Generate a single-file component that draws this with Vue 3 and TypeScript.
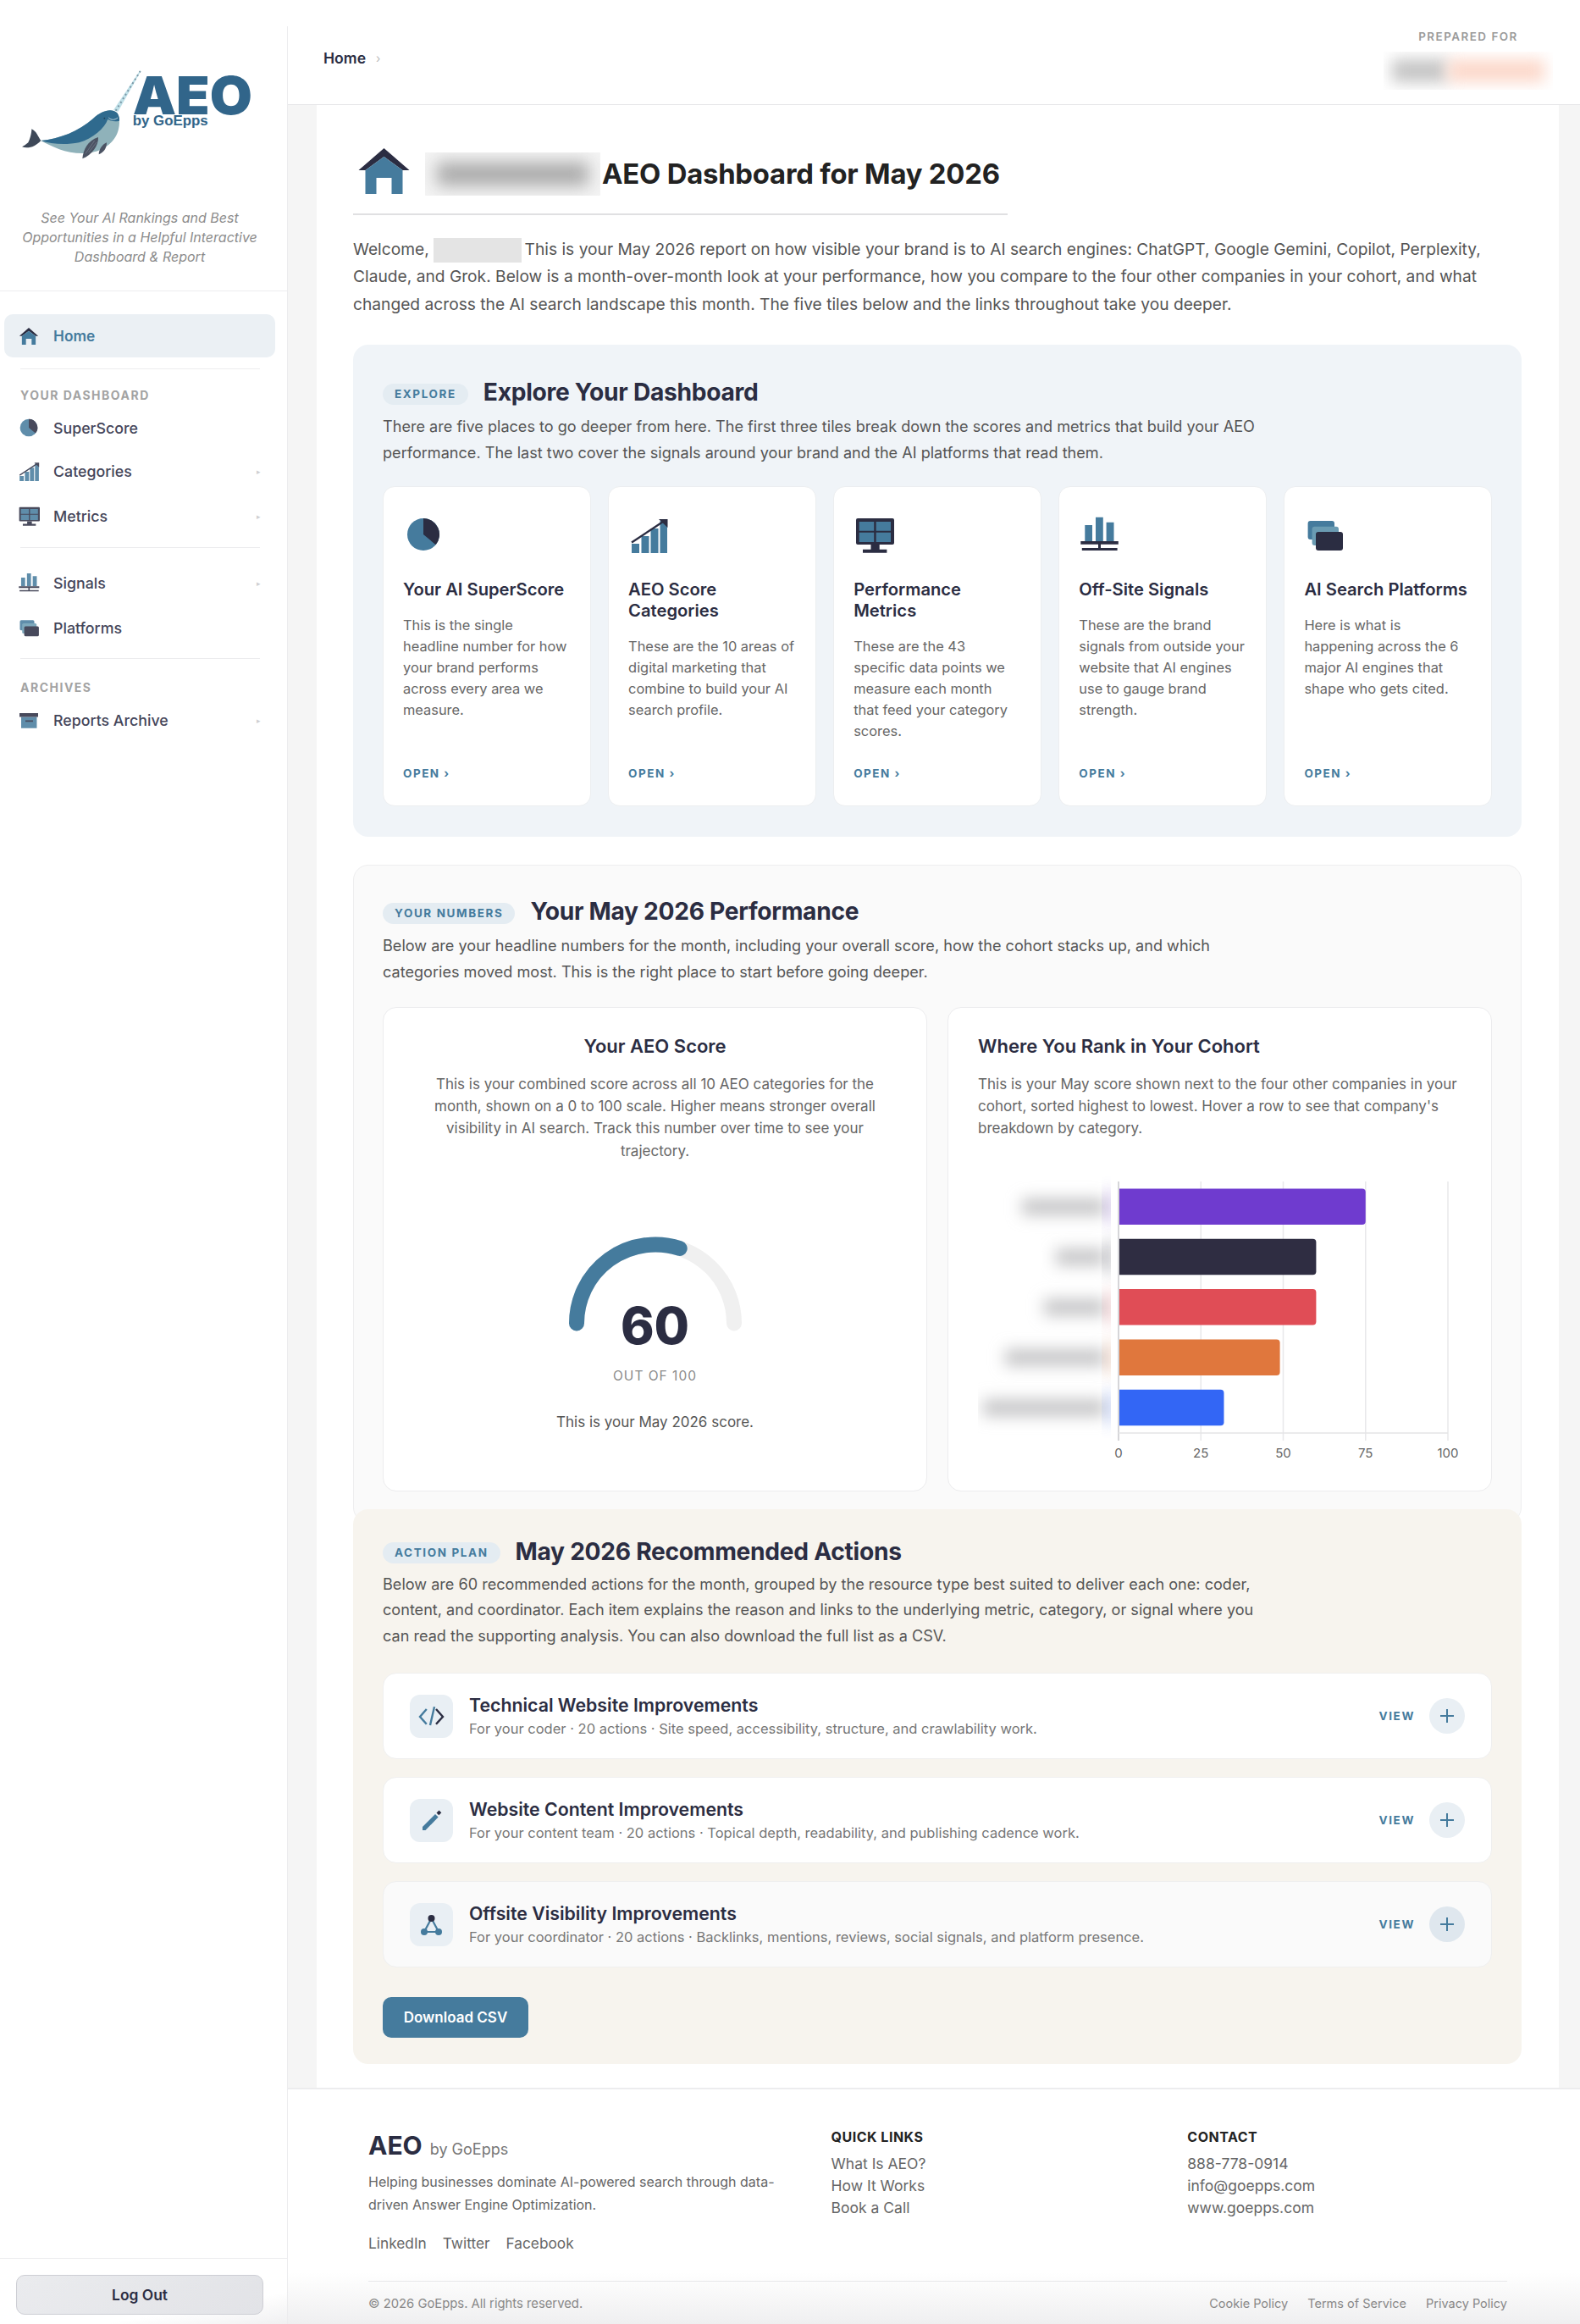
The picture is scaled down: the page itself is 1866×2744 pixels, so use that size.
<script setup lang="ts">
type NavItem = { label: string; icon: string; sub?: boolean }

const mainNav: NavItem[] = [
  { label: 'SuperScore', icon: 'i-pie' },
  { label: 'Categories', icon: 'i-growth', sub: true },
  { label: 'Metrics', icon: 'i-monitor', sub: true },
]
const signalNav: NavItem[] = [
  { label: 'Signals', icon: 'i-signals', sub: true },
  { label: 'Platforms', icon: 'i-stack' },
]

const tiles = [
  {
    icon: 'i-pie',
    title: 'Your AI SuperScore',
    text: 'This is the single headline number for how your brand performs across every area we measure.',
  },
  {
    icon: 'i-growth',
    title: 'AEO Score Categories',
    text: 'These are the 10 areas of digital marketing that combine to build your AI search profile.',
  },
  {
    icon: 'i-monitor',
    title: 'Performance Metrics',
    text: 'These are the 43 specific data points we measure each month that feed your category scores.',
  },
  {
    icon: 'i-signals',
    title: 'Off-Site Signals',
    text: 'These are the brand signals from outside your website that AI engines use to gauge brand strength.',
  },
  {
    icon: 'i-stack',
    title: 'AI Search Platforms',
    text: 'Here is what is happening across the 6 major AI engines that shape who gets cited.',
  },
]

const actions = [
  {
    icon: 'i-code',
    title: 'Technical Website Improvements',
    text: 'For your coder · 20 actions · Site speed, accessibility, structure, and crawlability work.',
  },
  {
    icon: 'i-pencil',
    title: 'Website Content Improvements',
    text: 'For your content team · 20 actions · Topical depth, readability, and publishing cadence work.',
  },
  {
    icon: 'i-nodes',
    title: 'Offsite Visibility Improvements',
    text: 'For your coordinator · 20 actions · Backlinks, mentions, reviews, social signals, and platform presence.',
  },
]

const ZERO_X = 166
const UNIT = 3.89
const cohort = [
  { value: 75, color: '#6f3bcf', labelX: 52 },
  { value: 60, color: '#2f2d42', labelX: 92 },
  { value: 60, color: '#e04d56', labelX: 78 },
  { value: 49, color: '#e0773d', labelX: 32 },
  { value: 32, color: '#3366f5', labelX: 6 },
]
const ticks = [0, 25, 50, 75, 100]

function barPath(value: number, index: number) {
  const top = 24.5 + index * 59.3
  const right = ZERO_X + value * UNIT
  return `M${ZERO_X + 1} ${top}H${right - 4}a4 4 0 0 1 4 4V${top + 38.5}a4 4 0 0 1 -4 4H${ZERO_X + 1}Z`
}
</script>

<template>
  <svg class="sprite" aria-hidden="true">
    <symbol id="i-house" viewBox="0 0 60 54">
      <path d="M0 26 30 0l30 26H52L30 10 8 26Z" fill="#2b2d42" />
      <path d="M8 26 30 10l22 16v28H39V35H21v19H8Z" fill="#457b9d" />
    </symbol>
    <symbol id="i-pie" viewBox="0 0 48 48">
      <circle cx="24" cy="24" r="19" fill="#457b9d" />
      <path d="M24 24V5a19 19 0 0 1 14.6 31.2Z" fill="#2b2d42" />
    </symbol>
    <symbol id="i-growth" viewBox="0 0 48 48">
      <path d="M4 35h9v11H4Zm11.500-9h9v20h-9Zm11-9h9v29h-9Zm11-9h8.500v38H37.500Z" fill="#457b9d" />
      <path d="M4 33.500 41 9" stroke="#2b2d42" stroke-width="2.400" fill="none" />
      <path d="M36 6h10.500v10Z" fill="#2b2d42" />
    </symbol>
    <symbol id="i-monitor" viewBox="0 0 48 48">
      <rect x="3" y="5" width="45" height="31" rx="2" fill="#2b2d42" />
      <path d="M6.700 9h17.500v10.700H6.700Zm20 0H44v10.700H26.700Zm-20 12.700h17.500V33H6.700Zm20 0H44V33H26.700Z" fill="#457b9d" />
      <path d="M20.500 36h10.200v5.700H39.400v4H11v-4h9.500Z" fill="#2b2d42" />
    </symbol>
    <symbol id="i-signals" viewBox="0 0 48 48">
      <path d="M7.300 13H16v19H7.300Zm12.700-9.300h8.800V32H20Zm12.600 6h8.900V32h-8.900Z" fill="#457b9d" />
      <path d="M2.300 32h44.500v3.700H26V40h19.600v3H3.800v-3H23v-4.300H2.300Z" fill="#2b2d42" />
    </symbol>
    <symbol id="i-stack" viewBox="0 0 48 48">
      <rect x="4.600" y="8" width="31.400" height="22" rx="3" fill="#457b9d" />
      <rect x="9.600" y="14.700" width="31.400" height="22.300" rx="3" fill="#6a9bb2" />
      <rect x="14" y="21" width="32" height="22" rx="3" fill="#2b2d42" />
    </symbol>
    <symbol id="i-archive" viewBox="0 0 48 48">
      <path d="M7.400 17.500h34.100V42H7.400Z" fill="#457b9d" />
      <path d="M3.700 9h40.600v8.500H3.700Zm12.900 16h16.600v3H16.600Z" fill="#2b2d42" />
    </symbol>
    <symbol id="i-code" viewBox="0 0 51 51">
      <path d="M19.800 17 12 26l7.800 8.700M29 14.300 24 36" stroke="#457b9d" stroke-width="2.400" fill="none" />
      <path d="M31 17l8 9-8 8.700" stroke="#2b2d42" stroke-width="2.400" fill="none" />
    </symbol>
    <symbol id="i-pencil" viewBox="0 0 51 51">
      <path d="M15 33 30 18l3.600 3.600L18.500 37H15Z" fill="#457b9d" />
      <path d="M31.500 16.500 34.500 13.500l2.800 2.800-3 3Z" fill="#2b2d42" />
    </symbol>
    <symbol id="i-nodes" viewBox="0 0 51 51">
      <path d="M25.500 18 17 34h17Z" stroke="#457b9d" stroke-width="2.200" fill="none" />
      <circle cx="17" cy="34" r="4" fill="#457b9d" />
      <circle cx="34" cy="34" r="4" fill="#457b9d" />
      <circle cx="25.500" cy="18" r="4" fill="#2b2d42" />
    </symbol>
  </svg>

  <div class="layout">
    <aside class="sidebar">
      <div class="brand">
        <svg class="logo" viewBox="0 0 960 510" role="img" aria-label="AEO by GoEpps">
          <path d="M402 270 496 130l3 2-81 144Z" fill="#bfe0e8" />
          <path d="M410 272 497 132" stroke="#7c98a6" stroke-width="6" stroke-dasharray="6 10" fill="none" />
          <path d="M145 378C210 372 280 345 330 300 360 272 395 262 415 280 424 292 426 320 418 345 405 385 365 420 300 423 235 425 185 400 145 378Z" fill="#8fb2ba" />
          <path d="M145 378C210 372 280 345 330 300 360 272 395 262 415 280 422 290 424 300 423 308 405 312 390 308 382 302 370 335 330 370 280 385 230 395 180 390 145 378Z" fill="#2f6a8e" />
          <path d="M385 297C395 306 405 306 417 297" stroke="#d7e8ec" stroke-width="2.500" fill="none" />
          <circle cx="370" cy="299" r="2.500" fill="#1f3d52" />
          <path d="M145 378C135 365 130 345 112 337 112 355 105 375 100 385 92 392 85 397 78 400 100 408 125 400 145 378Z" fill="#3e4858" />
          <path d="M292 442C295 410 310 378 348 366 350 395 325 430 292 442Z" fill="#4b5363" />
          <path d="M303 424 335 378M314 420 342 384" stroke="#8c93a0" stroke-width="1.500" fill="none" />
          <path d="M350 427C350 410 362 392 378 385 378 405 368 420 350 427Z" fill="#4b5363" />
          <text class="logo-mark" x="470" y="285" textLength="424" lengthAdjust="spacingAndGlyphs">AEO</text>
          <text class="logo-by" x="470" y="323" textLength="267" lengthAdjust="spacingAndGlyphs">by GoEpps</text>
        </svg>
        <p class="tagline">See Your AI Rankings and Best Opportunities in a Helpful Interactive Dashboard &amp; Report</p>
      </div>

      <nav class="nav">
        <a class="nav-item active">
          <svg class="nav-icon home-icon"><use href="#i-house" /></svg>
          <span>Home</span>
        </a>
        <div class="nav-divider first" />
        <p class="nav-label">Your Dashboard</p>
        <a v-for="item in mainNav" :key="item.label" class="nav-item" :class="{ 'has-sub': item.sub }">
          <svg class="nav-icon"><use :href="`#${item.icon}`" /></svg>
          <span>{{ item.label }}</span>
          <i v-if="item.sub" class="nav-arrow">▸</i>
        </a>
        <div class="nav-divider second" />
        <a v-for="item in signalNav" :key="item.label" class="nav-item" :class="{ 'has-sub': item.sub }">
          <svg class="nav-icon"><use :href="`#${item.icon}`" /></svg>
          <span>{{ item.label }}</span>
          <i v-if="item.sub" class="nav-arrow">▸</i>
        </a>
        <div class="nav-divider third" />
        <p class="nav-label archives">Archives</p>
        <a class="nav-item has-sub">
          <svg class="nav-icon"><use href="#i-archive" /></svg>
          <span>Reports Archive</span>
          <i class="nav-arrow">▸</i>
        </a>
      </nav>

      <div class="logout">
        <button type="button">Log Out</button>
      </div>
    </aside>

    <div class="main">
      <header class="topbar">
        <div class="crumb"><strong>Home</strong><span>›</span></div>
        <div class="prepared">
          <span>Prepared for</span>
          <div class="prepared-name"><i class="smudge-grey" /><i class="smudge-peach" /></div>
        </div>
      </header>

      <div class="page">
        <main class="sheet">
          <h1 class="title">
            <svg class="title-icon"><use href="#i-house" /></svg>
            <span class="title-redact"><i /></span>
            <span class="title-text">AEO Dashboard for May 2026</span>
          </h1>
          <p class="intro">
            Welcome, <span class="name-redact" /> This is your May 2026 report on how visible your brand is to AI search engines: ChatGPT, Google Gemini, Copilot, Perplexity, Claude, and Grok. Below is a month-over-month look at your performance, how you compare to the four other companies in your cohort, and what changed across the AI search landscape this month. The five tiles below and the links throughout take you deeper.
          </p>

          <section class="panel explore">
            <div class="panel-head">
              <span class="badge">Explore</span>
              <h2>Explore Your Dashboard</h2>
            </div>
            <p class="panel-text">
              There are five places to go deeper from here. The first three tiles break down the scores and metrics that build your AEO performance. The last two cover the signals around your brand and the AI platforms that read them.
            </p>
            <div class="tiles">
              <article v-for="tile in tiles" :key="tile.title" class="tile">
                <svg class="tile-icon"><use :href="`#${tile.icon}`" /></svg>
                <h3>{{ tile.title }}</h3>
                <p>{{ tile.text }}</p>
                <span class="open">Open ›</span>
              </article>
            </div>
          </section>

          <section class="panel numbers">
            <div class="panel-head">
              <span class="badge">Your Numbers</span>
              <h2>Your May 2026 Performance</h2>
            </div>
            <p class="panel-text">
              Below are your headline numbers for the month, including your overall score, how the cohort stacks up, and which categories moved most. This is the right place to start before going deeper.
            </p>
            <div class="number-grid">
              <article class="number-card score">
                <h3>Your AEO Score</h3>
                <p>This is your combined score across all 10 AEO categories for the month, shown on a 0 to 100 scale. Higher means stronger overall visibility in AI search. Track this number over time to see your trajectory.</p>
                <div class="gauge">
                  <svg viewBox="0 0 220 116" width="220" height="116">
                    <path d="M17 106.500A93 93 0 0 1 203 106.500" stroke="#f0f0f0" stroke-width="18" stroke-linecap="round" fill="none" />
                    <path d="M17 106.500A93 93 0 0 1 138.700 18" stroke="#457b9d" stroke-width="18" stroke-linecap="round" fill="none" />
                  </svg>
                  <strong>60</strong>
                </div>
                <span class="out-of">OUT OF 100</span>
                <p class="score-note">This is your May 2026 score.</p>
              </article>

              <article class="number-card">
                <h3>Where You Rank in Your Cohort</h3>
                <p>This is your May score shown next to the four other companies in your cohort, sorted highest to lowest. Hover a row to see that company's breakdown by category.</p>
                <svg class="chart" viewBox="0 0 570 350" width="570" height="350">
                  <defs>
                    <filter id="soft" x="-30%" y="-150%" width="160%" height="400%">
                      <feGaussianBlur stdDeviation="9" />
                    </filter>
                    <clipPath id="label-clip"><rect x="0" y="10" width="157" height="320" /></clipPath>
                  </defs>
                  <g clip-path="url(#label-clip)">
                    <template v-for="(row, index) in cohort" :key="row.color">
                      <rect :x="row.labelX" :y="36 + index * 59.300" :width="150 - row.labelX" height="20" fill="#c6c6c8" filter="url(#soft)" />
                      <rect x="150" :y="26 + index * 59.300" width="12" height="40" :fill="row.color" opacity="0.250" filter="url(#soft)" />
                    </template>
                  </g>
                  <line v-for="tick in ticks.slice(1)" :key="tick" :x1="ZERO_X + tick * UNIT" y1="16" :x2="ZERO_X + tick * UNIT" y2="322" stroke="#e8e8ea" stroke-width="1.500" />
                  <line :x1="ZERO_X" y1="16" :x2="ZERO_X" y2="322" stroke="#c9c9cd" stroke-width="1.500" />
                  <line :x1="ZERO_X" y1="313" :x2="ZERO_X + 389" y2="313" stroke="#e4e4e6" stroke-width="1.500" />
                  <path v-for="(row, index) in cohort" :key="index" :d="barPath(row.value, index)" :fill="row.color" />
                  <text v-for="tick in ticks" :key="`t${tick}`" class="tick" :x="ZERO_X + tick * UNIT" y="342" text-anchor="middle">{{ tick }}</text>
                </svg>
              </article>
            </div>
          </section>

          <section class="panel plan">
            <div class="panel-head">
              <span class="badge">Action Plan</span>
              <h2>May 2026 Recommended Actions</h2>
            </div>
            <p class="panel-text">
              Below are 60 recommended actions for the month, grouped by the resource type best suited to deliver each one: coder, content, and coordinator. Each item explains the reason and links to the underlying metric, category, or signal where you can read the supporting analysis. You can also download the full list as a CSV.
            </p>
            <div class="action-list">
              <article v-for="action in actions" :key="action.title" class="action">
                <span class="action-icon"><svg><use :href="`#${action.icon}`" /></svg></span>
                <div class="action-copy">
                  <h3>{{ action.title }}</h3>
                  <p>{{ action.text }}</p>
                </div>
                <span class="view">View</span>
                <span class="toggle">
                  <svg viewBox="0 0 16 16" width="16" height="16"><path d="M8 0v16M0 8h16" stroke="#457b9d" stroke-width="2" /></svg>
                </span>
              </article>
            </div>
            <button class="download" type="button">Download CSV</button>
          </section>
        </main>
      </div>

      <footer class="footer">
        <div class="footer-grid">
          <div>
            <div class="footer-brand"><strong>AEO</strong><span>by GoEpps</span></div>
            <p class="footer-text">Helping businesses dominate AI-powered search through data-driven Answer Engine Optimization.</p>
            <div class="socials"><a>LinkedIn</a><a>Twitter</a><a>Facebook</a></div>
          </div>
          <div class="footer-col">
            <h4>Quick Links</h4>
            <a>What Is AEO?</a>
            <a>How It Works</a>
            <a>Book a Call</a>
          </div>
          <div class="footer-col">
            <h4>Contact</h4>
            <a>888-778-0914</a>
            <a>info@goepps.com</a>
            <a>www.goepps.com</a>
          </div>
        </div>
        <div class="footer-bottom">
          <span>© 2026 GoEpps. All rights reserved.</span>
          <div class="legal"><a>Cookie Policy</a><a>Terms of Service</a><a>Privacy Policy</a></div>
        </div>
      </footer>
    </div>
  </div>
</template>

<style>
html,
body {
  margin: 0;
  background: #fff;
}
</style>

<style scoped>
* {
  box-sizing: border-box;
}

.sprite {
  height: 0;
  position: absolute;
  width: 0;
}

.layout {
  color: #2b2d42;
  display: flex;
  font-family: Inter, "Noto Sans", sans-serif;
  min-height: 100vh;
}

/* sidebar */
.sidebar {
  background: #fff;
  display: flex;
  flex: 0 0 340px;
  flex-direction: column;
  position: relative;
}

.sidebar::after {
  background: #ececee;
  bottom: 0;
  content: "";
  position: absolute;
  right: 0;
  top: 31px;
  width: 1px;
}

.brand {
  border-bottom: 1px solid #ececee;
  height: 344px;
  padding-top: 40px;
}

.logo {
  display: block;
  height: 170px;
  width: 320px;
}

.logo-mark {
  fill: #31658a;
  font-family: Inter, sans-serif;
  font-size: 186px;
  font-weight: 900;
}

.logo-by {
  fill: #31658a;
  font-family: "Liberation Sans", sans-serif;
  font-size: 47px;
  font-weight: 700;
}

.tagline {
  color: #8c8c8c;
  font-size: 16px;
  font-style: italic;
  line-height: 23px;
  margin: 36px 0 0 15px;
  text-align: center;
  width: 300px;
}

.nav {
  padding: 27px 15px 0 5px;
}

.nav-item {
  align-items: center;
  border-radius: 10px;
  color: #45465a;
  display: flex;
  font-size: 17.800px;
  font-weight: 500;
  gap: 16px;
  height: 48px;
  margin-bottom: 3px;
  padding: 0 17px 0 16px;
}

.nav-item.has-sub {
  margin-bottom: 5px;
}

.nav-item.active {
  background: #ebf0f4;
  color: #457b9d;
  font-size: 17.300px;
  font-weight: 600;
  height: 51px;
  margin-bottom: 0;
}

.nav-icon {
  flex: 0 0 26px;
  height: 26px;
  opacity: 0.86;
  width: 26px;
}

.home-icon {
  height: 20px;
  opacity: 1;
}

.nav-arrow {
  color: #cfcfd2;
  font-size: 9px;
  font-style: normal;
  margin-left: auto;
}

.nav-divider {
  background: #ececee;
  height: 1px;
  margin: 0 18px 0 19px;
}

.nav-divider.first {
  margin-bottom: 23px;
  margin-top: 13px;
}

.nav-divider.second {
  margin-bottom: 17px;
  margin-top: 13px;
}

.nav-divider.third {
  margin-bottom: 26px;
  margin-top: 12px;
}

.nav-label {
  color: #a3a3a3;
  font-size: 14px;
  font-weight: 700;
  letter-spacing: 1.500px;
  line-height: 16px;
  margin: 0 0 6px 19px;
  text-transform: uppercase;
}

.nav-label.archives {
  margin-bottom: 6px;
}

.logout {
  background: linear-gradient(170deg, #fff 72%, #f0f0f1);
  border-top: 1px solid #ececee;
  margin-right: 1px;
  margin-top: auto;
  padding: 19px 28px 11px 19px;
}

.logout button {
  background: linear-gradient(135deg, #eaebee, #e2e3e7);
  border: 1px solid #cdced4;
  border-radius: 10px;
  color: #2b2d42;
  display: block;
  font: 600 17.400px Inter, sans-serif;
  height: 47px;
  width: 100%;
}

/* top bar */
.main {
  display: flex;
  flex: 1;
  flex-direction: column;
  min-width: 0;
}

.topbar {
  align-items: center;
  background: #fff;
  border-bottom: 1px solid #e6e6e8;
  display: flex;
  height: 124px;
  justify-content: space-between;
  padding: 14px 32px 0 42px;
}

.crumb {
  align-items: center;
  display: flex;
  gap: 12px;
}

.crumb strong {
  color: #2b2d42;
  font-size: 17.600px;
  font-weight: 600;
}

.crumb span {
  color: #bbb;
  font-size: 14px;
}

.prepared {
  align-items: center;
  display: flex;
  flex-direction: column;
  gap: 10px;
  margin-top: 4px;
}

.prepared > span {
  color: #9a9a9a;
  font-size: 13.400px;
  font-weight: 600;
  letter-spacing: 1.500px;
  line-height: 16px;
  text-transform: uppercase;
}

.prepared-name {
  display: flex;
  height: 45px;
  overflow: hidden;
  padding: 9px 10px;
  width: 200px;
}

.prepared-name i {
  display: block;
  filter: blur(9px);
  height: 27px;
}

.smudge-grey {
  background: #c4c4c4;
  flex: 0 0 66px;
}

.smudge-peach {
  background: #fcd8ca;
  flex: 1;
}

/* page */
.page {
  background: #f5f5f5;
  flex: 1;
  padding: 0 25px 0 34px;
}

.sheet {
  background: #fff;
  height: 100%;
  padding: 51px 44px 27px 43px;
}

.title {
  align-items: flex-start;
  border-bottom: 2px solid #e0e0e2;
  color: #222;
  display: inline-flex;
  font-size: 32.800px;
  font-weight: 700;
  height: 79px;
  letter-spacing: -0.2px;
  margin: 0;
  padding-right: 9px;
}

.title-icon {
  flex: 0 0 61px;
  height: 54px;
  margin: 0 18px 0 6px;
  width: 61px;
}

.title-redact {
  background: #f4f4f4;
  display: block;
  flex: 0 0 207px;
  height: 51px;
  margin: 5px 2px 0 0;
  overflow: hidden;
  padding: 12px 14px;
}

.title-redact i {
  background: #a8a8a8;
  display: block;
  filter: blur(10px);
  height: 27px;
}

.title-text {
  line-height: 54px;
  margin-top: 3px;
}

.intro {
  color: #555;
  font-size: 19.200px;
  line-height: 32.400px;
  margin: 24px 0 32px;
}

.name-redact {
  background: #e4e4e4;
  display: inline-block;
  height: 29px;
  margin-right: -2px;
  vertical-align: middle;
  width: 104px;
}

.panel {
  border-radius: 18px;
  margin-bottom: 33px;
  padding: 37px 35px 36px;
}

.panel-head {
  align-items: center;
  display: flex;
  gap: 18px;
}

.panel-head h2 {
  color: #2b2d42;
  font-size: 28.200px;
  font-weight: 700;
  letter-spacing: -0.300px;
  line-height: 38px;
  margin: 0;
}

.badge {
  background: #e4ecf2;
  border-radius: 14px;
  color: #457b9d;
  font-size: 13.500px;
  font-weight: 700;
  letter-spacing: 1.600px;
  line-height: 25px;
  margin-top: 4px;
  padding: 0 14px;
  text-transform: uppercase;
}

.panel-text {
  color: #555;
  font-size: 18.100px;
  line-height: 30.600px;
  margin: 6px 0 25px;
  max-width: 1040px;
}

.explore {
  background: #f0f4f8;
}

.tiles {
  display: grid;
  gap: 20.500px;
  grid-template-columns: repeat(5, 1fr);
}

.tile {
  background: #fff;
  border: 1px solid #eceef0;
  border-radius: 14px;
  display: flex;
  flex-direction: column;
  padding: 32px 24.500px 28px 23px;
}

.tile-icon {
  display: block;
  flex: none;
  height: 48px;
  width: 48px;
}

.tile h3 {
  color: #2b2d42;
  font-size: 20.200px;
  font-weight: 600;
  line-height: 25px;
  margin: 28px -4px 18px 0;
}

.tile p {
  color: #666;
  font-size: 16.400px;
  line-height: 25px;
  margin: 0;
}

.open {
  color: #457b9d;
  font-size: 13.500px;
  font-weight: 700;
  letter-spacing: 1.500px;
  line-height: 20px;
  margin-top: auto;
  padding-top: 27px;
  text-transform: uppercase;
}

.numbers {
  background: #fafafa;
  border: 1px solid #eeeeef;
  margin-bottom: 0;
  padding: 35px 34px 36px;
}

.numbers .panel-text {
  margin: 6px 0 26px;
}

.number-grid {
  display: grid;
  gap: 24px;
  grid-template-columns: 1fr 1fr;
}

.number-card {
  background: #fff;
  border: 1px solid #ececee;
  border-radius: 16px;
  height: 572px;
  padding: 31px 35px;
}

.number-card h3 {
  color: #2b2d42;
  font-size: 22px;
  font-weight: 600;
  line-height: 28px;
  margin: 0 0 18px;
}

.number-card p {
  color: #666;
  font-size: 17px;
  line-height: 26.400px;
  margin: 0;
}

.score {
  align-items: center;
  display: flex;
  flex-direction: column;
  text-align: center;
}

.gauge {
  margin-top: 84px;
  position: relative;
}

.gauge svg {
  display: block;
}

.gauge strong {
  bottom: -29px;
  color: #2b2d42;
  font-size: 60px;
  font-weight: 800;
  left: 0;
  line-height: 72px;
  position: absolute;
  right: 0;
}

.out-of {
  color: #8a8a8a;
  font-size: 15.500px;
  letter-spacing: 1px;
  line-height: 20px;
  margin-top: 43px;
}

.number-card .score-note {
  color: #555;
  margin-top: 31px;
}

.chart {
  display: block;
  margin-top: 33px;
}

.tick {
  fill: #666;
  font-family: Inter, sans-serif;
  font-size: 15px;
}

.plan {
  background: #f7f4ee;
  margin: -16px 0 0;
  padding: 31px 35px 31px;
  position: relative;
}

.plan .panel-text {
  margin: 4px 0 29px;
}

.action-list {
  display: flex;
  flex-direction: column;
  gap: 21px;
}

.action {
  align-items: center;
  background: #fff;
  border: 1px solid #efefef;
  border-radius: 16px;
  display: flex;
  height: 102px;
  padding: 0 31px;
}

.action:last-child {
  background: #fafafa;
}

.action:last-child .toggle {
  background: #dfe7ee;
}

.action-icon {
  background: #e9eff4;
  border-radius: 12px;
  flex: 0 0 51px;
  height: 51px;
  margin-right: 19px;
}

.action-icon svg {
  display: block;
  height: 51px;
  width: 51px;
}

.action-copy {
  flex: 1;
}

.action h3 {
  color: #2b2d42;
  font-size: 21.300px;
  font-weight: 600;
  line-height: 28px;
  margin: 0;
}

.action p {
  color: #777;
  font-size: 16.500px;
  line-height: 24px;
  margin: 2px 0 0;
}

.view {
  color: #457b9d;
  font-size: 13.500px;
  font-weight: 700;
  letter-spacing: 1.600px;
  margin-right: 17px;
  text-transform: uppercase;
}

.toggle {
  align-items: center;
  background: #e9eff4;
  border-radius: 50%;
  display: flex;
  flex: 0 0 42px;
  height: 42px;
  justify-content: center;
}

.download {
  background: #457b9d;
  border: 0;
  border-radius: 10px;
  color: #fff;
  display: block;
  font: 600 17px Inter, sans-serif;
  height: 48px;
  margin-top: 35px;
  width: 172px;
}

/* footer */
.footer {
  background: linear-gradient(#fff 78%, #efeff0);
  border-top: 2px solid #ececee;
  height: 279px;
  padding: 46px 86px 0 95px;
}

.footer-grid {
  display: grid;
  gap: 43px;
  grid-template-columns: 4fr 3fr 3fr;
  height: 180px;
}

.footer-brand {
  align-items: baseline;
  display: flex;
  gap: 9px;
}

.footer-brand strong {
  color: #2b2d42;
  font-size: 30px;
  font-weight: 700;
  line-height: 40px;
}

.footer-brand span {
  color: #777;
  font-size: 18px;
}

.footer-text {
  color: #666;
  font-size: 16px;
  line-height: 27px;
  margin: 10px 0 0;
}

.socials {
  color: #666;
  display: flex;
  font-size: 17.300px;
  gap: 19px;
  margin-top: 21px;
}

.footer-col {
  display: flex;
  flex-direction: column;
  font-size: 17.500px;
}

.footer-col h4 {
  color: #222;
  font-size: 16px;
  font-weight: 700;
  letter-spacing: 0.500px;
  line-height: 20px;
  margin: 0 0 9px;
  text-transform: uppercase;
}

.footer-col a {
  color: #666;
  line-height: 26px;
}

.footer-bottom {
  align-items: center;
  border-top: 1px solid #e8e8ea;
  color: #888;
  display: flex;
  font-size: 14.800px;
  height: 52px;
  justify-content: space-between;
}

.legal {
  display: flex;
  font-size: 14.500px;
  gap: 23px;
}
</style>
